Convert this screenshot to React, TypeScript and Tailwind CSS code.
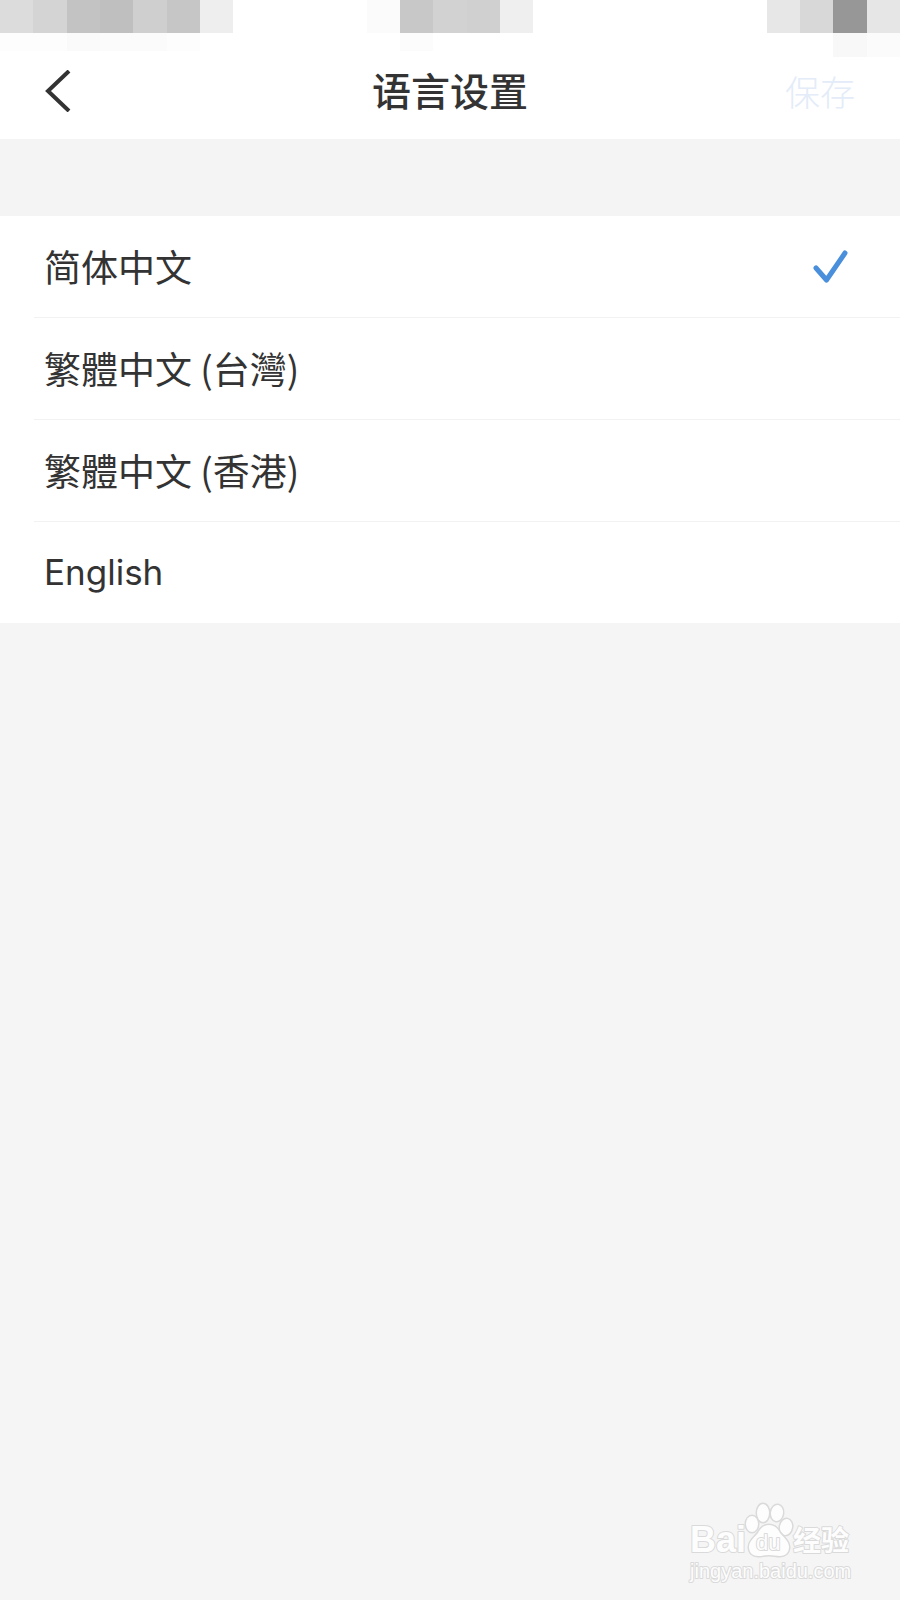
import { useState } from 'react';

const languages = [
    { id: 'zh-CN', label: '简体中文', style: 'text-[37px] font-["Noto_Sans_CJK_SC",sans-serif]' },
    { id: 'zh-TW', label: '繁體中文 (台灣)', style: 'text-[37px] font-["Noto_Sans_CJK_TC",sans-serif]' },
    { id: 'zh-HK', label: '繁體中文 (香港)', style: 'text-[37px] font-["Noto_Sans_CJK_TC",sans-serif]' },
    { id: 'en', label: 'English', style: 'text-[35px] font-["Inter","Noto_Sans_CJK_SC",sans-serif]' },
];

// 27 equal cells across the top, the shadow row is the faint strip below
const statusCells = [
    'bg-[#dcdcdc]', 'bg-[#d4d4d4]', 'bg-[#c3c3c3]', 'bg-[#bfbfbf]', 'bg-[#cfcfcf]', 'bg-[#c6c6c6]', 'bg-[#eeeeee]',
    '', '', '', '',
    'bg-[#fbfbfb]', 'bg-[#c8c8c8]', 'bg-[#d2d2d2]', 'bg-[#d0d0d0]', 'bg-[#efefef]',
    '', '', '', '', '', '', '',
    'bg-[#e7e7e7]', 'bg-[#d8d8d8]', 'bg-[#979797]', 'bg-[#e6e6e6]',
];

const shadowCells = [
    'bg-[#fdfdfd]', 'bg-[#fdfdfd]', 'bg-[#fafafa]', 'bg-[#fbfbfb]', 'bg-[#fbfbfb]', 'bg-[#fdfdfd]', '',
    '', '', '', '',
    '', 'bg-[#fcfcfc]', '', '', '',
    '', '', '', '', '', '', '',
    '', '', 'bg-[#f8f8f8] h-6', 'bg-[#fbfbfb] h-6',
];

function StatusBar() {
    return (
        <div className="h-[51px]" aria-hidden="true">
            <div className="flex h-[33px]">
                {statusCells.map((color, i) => (
                    <div key={i} className={`flex-1 ${color}`} />
                ))}
            </div>
            <div className="flex items-start h-[18px]">
                {shadowCells.map((color, i) => (
                    <div key={i} className={`flex-1 min-h-[18px] ${color}`} />
                ))}
            </div>
        </div>
    );
}

function Watermark() {
    return (
        <svg
            className="absolute bottom-4 right-[43px] w-[172px] h-[84px]"
            viewBox="0 0 172 84"
            fill="#fdfdfd"
            stroke="#dadada"
            strokeWidth="2"
            strokeLinejoin="round"
            paintOrder="stroke"
            role="img"
            aria-label="Baidu 经验"
        >
            <text x="5" y="52" fontSize="36" fontWeight="700" className='font-["Liberation_Sans",sans-serif]'>Bai</text>
            <g strokeWidth="3">
                <ellipse cx="67" cy="24" rx="6" ry="8" />
                <ellipse cx="78" cy="13" rx="6" ry="9" />
                <ellipse cx="92" cy="13" rx="6" ry="8" transform="rotate(8 92 13)" />
                <ellipse cx="101" cy="27" rx="6" ry="8" transform="rotate(10 101 27)" />
                <path d="M84 25c-6 0-9 4-11 8-3 4-9 8-9 14s4 9 9 9c4 0 7-1 11-1s7 1 11 1c5 0 9-3 9-9s-6-10-9-14c-2-4-5-8-11-8z" />
            </g>
            <text x="71" y="50" fontSize="22" className='font-["Liberation_Sans",sans-serif]'>du</text>
            <text x="108" y="51" fontSize="28" fontWeight="700" className='font-["Noto_Sans_CJK_SC",sans-serif]'>经验</text>
            <text x="5" y="78" fontSize="20" className='font-["Liberation_Sans",sans-serif]'>jingyan.baidu.com</text>
        </svg>
    );
}

export default function App() {
    const [selected, setSelected] = useState('zh-CN');
    const [saved, setSaved] = useState('zh-CN');

    return (
        <div className='relative min-h-screen bg-[#f5f5f5] text-[#333333] font-["Noto_Sans_CJK_SC",sans-serif]'>
            <header className="bg-white">
                <StatusBar />
                <div className="grid grid-cols-[1fr_auto_1fr] items-center px-[45px] pb-[9px] h-[88px]">
                    <button type="button" aria-label="返回" className="justify-self-start">
                        <svg className="w-[26px] h-[42px]" viewBox="0 0 26 42" fill="none" stroke="currentColor" strokeWidth="4">
                            <path d="M24 1L3 21l21 20" />
                        </svg>
                    </button>
                    <h1 className="pb-1 text-[39px] leading-[56px] font-medium">语言设置</h1>
                    <button
                        type="button"
                        className="justify-self-end text-[35px] leading-[52px] font-light text-[#4a90e2] disabled:text-[#e3ecf8]"
                        disabled={selected === saved}
                        onClick={() => setSaved(selected)}
                    >
                        保存
                    </button>
                </div>
            </header>

            <div className="h-[77px] bg-[#f4f4f4]" />

            <div role="radiogroup" aria-label="语言设置" className="bg-white">
                {languages.map((lang) => (
                    <label
                        key={lang.id}
                        className="ml-[34px] pl-[10px] pr-[52px] py-6 flex items-center justify-between border-b border-[#f2f2f2] last:border-b-0 cursor-pointer"
                    >
                        <input
                            type="radio"
                            name="language"
                            className="sr-only"
                            checked={selected === lang.id}
                            onChange={() => setSelected(lang.id)}
                        />
                        <span className={`leading-[53px] ${lang.style}`}>{lang.label}</span>
                        {selected === lang.id && (
                            <svg className="w-[35px] h-[33px]" viewBox="0 0 35 33" fill="none" stroke="#4a8fdc" strokeWidth="5" strokeLinecap="round" strokeLinejoin="round">
                                <path d="M3 18l10.5 12L32 3" />
                            </svg>
                        )}
                    </label>
                ))}
            </div>

            <Watermark />
        </div>
    );
}
